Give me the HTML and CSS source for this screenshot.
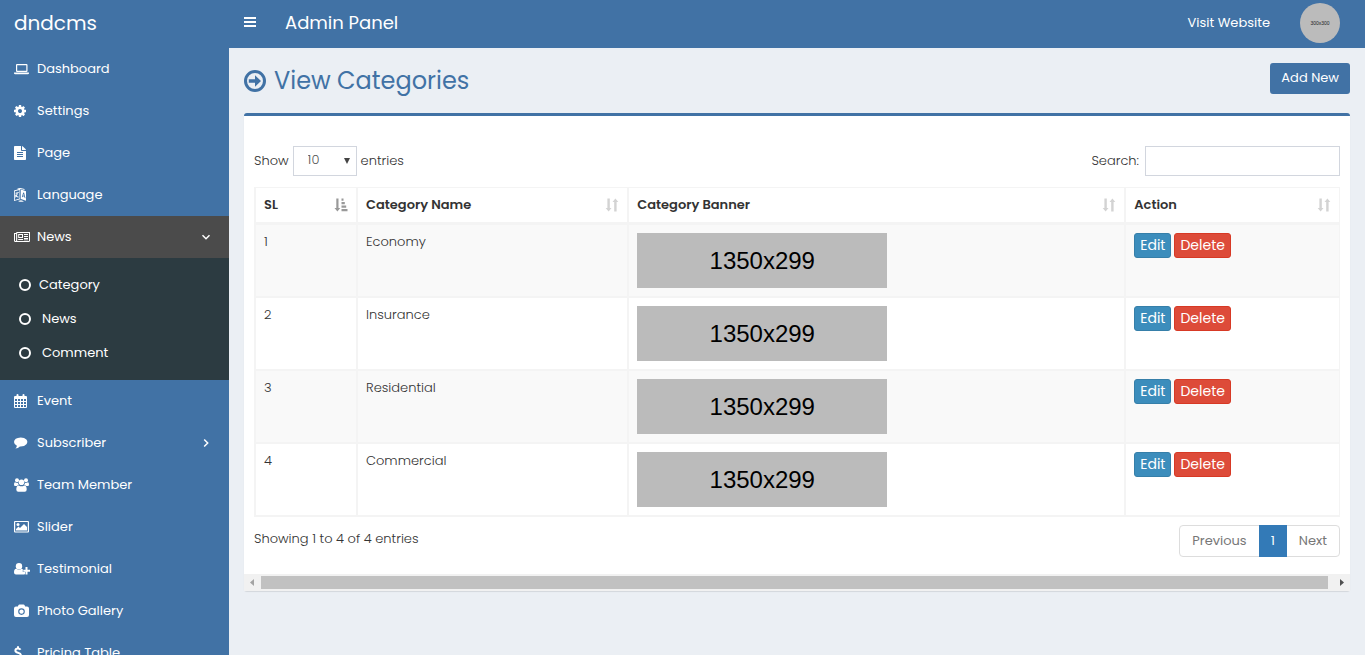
FILE: index.html
```html
<!DOCTYPE html>
<html lang="en">
<head>
<meta charset="utf-8">
<title>Admin Panel</title>
<link rel="stylesheet" href="styles.css">
</head>
<body>
<svg class="sprite" aria-hidden="true">
  <symbol id="sort" viewBox="0 0 14 14"><path d="M2.400 .5h2.400v9.500h1.700L3.600 13.500.7 10h1.700zM9.200 13.500V4H7.500L10.400.5 13.300 4h-1.700v9.500z"/></symbol>
  <symbol id="sort-asc" viewBox="0 0 14 14"><path d="M2.300 .5h2.200v9.500h1.800L3.400 13.500.5 10h1.800zM7.500.5h2v2.300h-2zM7.500 4h3.300v2.300H7.500zM7.500 7.500h4.700v2.300H7.500zM7.500 11h6v2.300h-6z"/></symbol>
</svg>
<div class="app">
  <aside class="sidebar">
    <a class="brand" href="#">dndcms</a>
    <nav>
      <ul class="menu">
        <li><a class="item" href="#"><svg class="icon" viewBox="0 0 16 14"><path fill-rule="evenodd" d="M3 2h9.500q1 0 1 1v6q0 1-1 1H3q-1 0-1-1V3q0-1 1-1zm.2 1.200v5.600h9.100V3.200zM0 10.600h15v.7q0 1-1.300 1H1.300Q0 12.300 0 11.300z"/></svg>Dashboard</a></li>
        <li><a class="item" href="#"><svg class="icon" viewBox="128 0 2048 1792"><path d="M1152 896q0-106-75-181t-181-75-181 75-75 181 75 181 181 75 181-75 75-181zm512-109v222q0 12-8 23t-20 13l-185 28q-19 54-39 91 35 50 107 138 10 12 10 25t-9 23q-27 37-99 108t-94 71q-12 0-26-9l-138-108q-44 23-91 38-16 136-29 186-7 28-36 28h-222q-14 0-24.500-8.500t-11.500-21.500l-28-184q-49-16-90-37l-141 107q-10 9-25 9-14 0-25-11-126-114-165-168-7-10-7-23 0-12 8-23 15-21 51-66.500t54-70.500q-27-50-41-99l-183-27q-13-2-21-12.500t-8-23.500v-222q0-12 8-23t19-13l186-28q14-46 39-92-40-57-107-138-10-12-10-24 0-10 9-23 26-36 98.500-107.500t94.500-71.500q13 0 26 10l138 107q44-23 91-38 16-136 29-186 7-28 36-28h222q14 0 24.500 8.500t11.500 21.500l28 184q49 16 90 37l142-107q9-9 24-9 13 0 25 10 129 119 165 170 7 8 7 22 0 12-8 23-15 21-51 66.500t-54 70.500q26 50 41 98l183 28q13 2 21 12.500t8 23.500z"/></svg>Settings</a></li>
        <li><a class="item" href="#"><svg class="icon" viewBox="0 0 16 14"><path fill-rule="evenodd" d="M.8 0H7v4.200q0 .8.800.8H12v8.200q0 .8-.8.800H.8Q0 14 0 13.200V.8Q0 0 .8 0zM8 0q.5.100.900.500l2.600 2.600q.4.400.5.900H8zM3 6v1h6V6zm0 2v1h6V8zm0 2v1h6v-1z"/></svg>Page</a></li>
        <li><a class="item" href="#"><svg class="icon" viewBox="0 0 16 14"><path fill-rule="evenodd" d="M0 2.500L6.300.8v10.500L0 13zM.8 3.200v8.700l4.700-1.300V2zM7 1.500l5 1.700v9.600l-5-1.700zm2.200 3L7.900 9l.8.300.3-1 1.400.5.300 1.200.8.200-1.400-5.400zm.4 1.200.6 2-1-.3z"/><path d="M1.500 4.800l3.300-.9v.9l-1.200.4q-.1 1.800-.8 2.900.9.500 1.800.4v.9q-1.300.1-2.400-.6-.5.700-1 .900l-.2-.8q.300-.2.600-.6-.6-.6-.7-1.500l.7-.2q.1.500.4.900.5-1 .6-2l-1.100.3zM3 .9Q5-.2 7.500.2l3 .8v1L7 1 4.200 1.500zM4 13l3-.8 3 1q-3 1.400-6-.2z"/></svg>Language</a></li>
        <li class="open">
          <a class="item active" href="#"><svg class="icon" viewBox="0 0 16 14"><path fill-rule="evenodd" d="M2.300 2H16v8.700q0 1.300-1.300 1.300H1.300Q0 12 0 10.700V3h2.300zM1 4v6.600q0 .4.500.4t.6-.5V4zm2.200-1v7.600l-.1.400h11.500q.4 0 .4-.4V3zM4.200 4H9v4H4.200zm1 1v2H8V5zM4.200 9H9v1H4.200zM10 4h4v1h-4zm0 2h4v1h-4zm0 2h4v1h-4zm0 1.500h4v.7h-4z"/></svg>News<svg class="chevron" viewBox="0 0 10 10"><path d="M1.500 3.200L5 6.700l3.500-3.500"/></svg></a>
          <ul class="submenu">
            <li><a class="subitem tight" href="#"><svg class="ring" viewBox="0 0 12 12"><circle cx="6" cy="6" r="5"/></svg>Category</a></li>
            <li><a class="subitem" href="#"><svg class="ring" viewBox="0 0 12 12"><circle cx="6" cy="6" r="5"/></svg>News</a></li>
            <li><a class="subitem" href="#"><svg class="ring" viewBox="0 0 12 12"><circle cx="6" cy="6" r="5"/></svg>Comment</a></li>
          </ul>
        </li>
        <li><a class="item" href="#"><svg class="icon" viewBox="0 0 16 14"><path fill-rule="evenodd" d="M1 2h1.500V1q0-1 1-1t1 1v1h4V1q0-1 1-1t1 1v1H12q1 0 1 1v10q0 1-1 1H1q-1 0-1-1V3q0-1 1-1zm0 3v2h2V5zm3 0v2h2V5zm3 0v2h2V5zm3 0v2h2V5zM1 8v2h2V8zm3 0v2h2V8zm3 0v2h2V8zm3 0v2h2V8zM1 11v2h2v-2zm3 0v2h2v-2zm3 0v2h2v-2zm3 0v2h2v-2z"/></svg>Event</a></li>
        <li><a class="item" href="#"><svg class="icon" viewBox="0 0 16 14"><path d="M6.700 1.500q3.800 0 5.700 2 1.900 2.300 0 4.800-2 2.400-6.500 2.200-1.700 1.800-4.500 2.100 1.400-1.200 1.500-2.900Q0 8.300 0 6q.200-4.200 6.700-4.500z"/></svg>Subscriber<svg class="chevron" viewBox="0 0 10 10"><path d="M3.200 1.500L6.700 5 3.200 8.500"/></svg></a></li>
        <li><a class="item" href="#"><svg class="icon" viewBox="0 0 16 14"><circle cx="3" cy="2.300" r="2"/><circle cx="12" cy="2.300" r="2"/><circle cx="7.500" cy="4.300" r="2.800"/><path d="M0 6.800Q0 4 1.500 4.400q1.300.800 2.500.3Q4 6 4.900 7q-1.300 0-2.100 1H1.200Q0 8 0 6.800zM15 6.800Q15 4 13.500 4.400q-1.300.8-2.500.3Q11 6 10.100 7q1.300 0 2.100 1h1.600Q15 8 15 6.800zM2.300 11.500q0-4 2.500-4 2.700 1.700 5.400 0 2.500 0 2.500 4 0 2.300-2 2.300H4.300q-2 0-2-2.300z"/></svg>Team Member</a></li>
        <li><a class="item" href="#"><svg class="icon" viewBox="0 0 16 14"><path fill-rule="evenodd" d="M1 1h13q1 0 1 1v9.500q0 1-1 1H1q-1 0-1-1V2q0-1 1-1zm.2 1.100v9.300h12.600V2.100z"/><circle cx="4" cy="4.500" r="1.500"/><path d="M2 10.500V9l2.500-2.500L6 8l4-4 3 3v3.500z"/></svg>Slider</a></li>
        <li><a class="item" href="#"><svg class="icon" viewBox="0 0 16 14"><circle cx="5" cy="4.300" r="3.200"/><path d="M0 10.500Q0 6.500 2.500 6.800q2.500 1.800 5 0 1 0 1.600.700H8.800V10H11v2q-.6.500-1.600.5H2Q0 12.500 0 10.500zM11.500 5h2v2.700H16v2h-2.500v2.800h-2V9.700H9.300v-2h2.200z"/></svg>Testimonial</a></li>
        <li><a class="item" href="#"><svg class="icon" viewBox="0 0 16 14"><path fill-rule="evenodd" d="M2 2.500h1.800l.6-1.300Q4.700.5 5.500.5h4q.8 0 1.100.7l.6 1.300H13q2 0 2 2V11q0 2-2 2H2q-2 0-2-2V4.500q0-2 2-2zm5.500 1.800a3.300 3.300 0 1 0 0 6.600 3.300 3.300 0 1 0 0-6.600zm0 1.100a2.200 2.200 0 1 1 0 4.400 2.200 2.200 0 1 1 0-4.400z"/></svg>Photo Gallery</a></li>
        <li><a class="item" href="#"><svg class="icon line" viewBox="0 0 16 14"><path d="M6.500 3.800Q5.800 2.500 4 2.500 1.400 2.500 1.400 4.400q0 1.700 2.600 2.400 3 .8 3 2.700 0 2-2.800 2Q2 11.500 1 10M4 .2v2.300M4 11.500v2.300"/></svg>Pricing Table</a></li>
      </ul>
    </nav>
  </aside>
  <div class="main">
    <header class="topbar">
      <button class="toggle" type="button" aria-label="Toggle navigation"><svg viewBox="0 0 12 10"><path d="M0 0h12v2H0zM0 4h12v2H0zM0 8h12v2H0z"/></svg></button>
      <span class="panel-name">Admin Panel</span>
      <a class="visit" href="#">Visit Website</a>
      <a class="avatar" href="#">300x300</a>
    </header>
    <main class="content">
      <div class="page-head">
        <h1><svg viewBox="0 0 22 22"><circle cx="11" cy="11" r="9.500"/><path d="M4.800 9.300H11V5.200l6 5.800-6 5.800v-4.100H4.800z"/></svg>View Categories</h1>
        <a class="add" href="#">Add New</a>
      </div>
      <section class="box">
        <div class="box-body">
          <div class="controls">
            <label class="length">Show
              <span class="select"><select><option>10</option><option>25</option><option>50</option></select><svg viewBox="0 0 6 6"><path d="M0 0h6L3 6z"/></svg></span>
              entries</label>
            <label class="search">Search: <input type="search"></label>
          </div>
          <table class="grid">
            <colgroup><col class="c-sl"><col class="c-name"><col class="c-banner"><col></colgroup>
            <thead>
              <tr>
                <th><div class="th">SL<svg class="on"><use href="#sort-asc"/></svg></div></th>
                <th><div class="th">Category Name<svg><use href="#sort"/></svg></div></th>
                <th><div class="th">Category Banner<svg><use href="#sort"/></svg></div></th>
                <th><div class="th">Action<svg><use href="#sort"/></svg></div></th>
              </tr>
            </thead>
            <tbody>
              <tr><td>1</td><td>Economy</td><td><div class="banner">1350x299</div></td><td><div class="actions"><a class="btn edit" href="#">Edit</a><a class="btn delete" href="#">Delete</a></div></td></tr>
              <tr><td>2</td><td>Insurance</td><td><div class="banner">1350x299</div></td><td><div class="actions"><a class="btn edit" href="#">Edit</a><a class="btn delete" href="#">Delete</a></div></td></tr>
              <tr><td>3</td><td>Residential</td><td><div class="banner">1350x299</div></td><td><div class="actions"><a class="btn edit" href="#">Edit</a><a class="btn delete" href="#">Delete</a></div></td></tr>
              <tr><td>4</td><td>Commercial</td><td><div class="banner">1350x299</div></td><td><div class="actions"><a class="btn edit" href="#">Edit</a><a class="btn delete" href="#">Delete</a></div></td></tr>
            </tbody>
          </table>
          <div class="footer">
            <span>Showing 1 to 4 of 4 entries</span>
            <nav class="pages"><a href="#">Previous</a><a class="current" href="#">1</a><a href="#">Next</a></nav>
          </div>
        </div>
        <div class="scrollbar" aria-hidden="true">
          <svg class="dim" viewBox="0 0 17 17"><path d="M10 5v7L6 8.500z"/></svg>
          <div class="track"><div class="thumb"></div></div>
          <svg viewBox="0 0 17 17"><path d="M7 5v7l4-3.500z"/></svg>
        </div>
      </section>
    </main>
  </div>
</div>
</body>
</html>
```
FILE: styles.css
```css
* { box-sizing: border-box; }
body {
  margin: 0;
  height: 100vh;
  overflow: hidden;
  background: #ebeff4;
  color: #333;
  font: 13px/18px Poppins, Inter, sans-serif;
}
a { color: inherit; text-decoration: none; }
ul { margin: 0; padding: 0; list-style: none; }
svg { flex: none; fill: currentColor; }
.sprite { position: absolute; width: 0; height: 0; }

.app { display: flex; height: 100%; }

.sidebar { flex: none; width: 229px; overflow: hidden; background: #4172a5; color: #fff; }
.brand { display: block; height: 48px; padding-left: 14px; font-size: 20px; line-height: 46px; }
.item { display: flex; align-items: center; height: 42px; padding: 0 18px 1px 14px; }
.item.active { background: #4b4b4b; }
.icon { width: 16px; height: 14px; margin-right: 7px; }
.icon.line { fill: none; stroke: currentColor; stroke-width: 2; }
.chevron { width: 10px; height: 10px; margin-left: auto; fill: none; stroke: currentColor; stroke-width: 1.5; }
.submenu { padding: 10px 0; background: #2c3b41; }
.subitem { display: flex; align-items: center; gap: 11px; height: 34px; padding: 0 19px 1px; }
.subitem.tight { gap: 8px; }
.ring { width: 12px; height: 12px; fill: none; stroke: currentColor; stroke-width: 2; }

.main { flex: 1; min-width: 0; }
.topbar { display: flex; align-items: center; height: 48px; padding: 0 25px 2px 15px; background: #4172a5; color: #fff; }
.toggle { margin: 0 29px 0 0; padding: 0 0 2px; border: 0; background: none; color: inherit; line-height: 0; }
.toggle svg { width: 12px; height: 10px; }
.panel-name { font-size: 18px; }
.visit { margin-left: auto; }
.avatar { width: 40px; height: 40px; margin-left: 30px; border-radius: 50%; background: #bbb; color: #222; font: 5px/40px "Liberation Sans", sans-serif; text-align: center; }

.content { padding: 15px; }
.page-head { display: flex; justify-content: space-between; align-items: flex-start; height: 50px; color: #4172a5; }
h1 { display: flex; align-items: center; gap: 8px; margin: 0; font-size: 24px; font-weight: 400; line-height: 36px; }
h1 svg { width: 22px; height: 22px; }
h1 circle { fill: none; stroke: currentColor; stroke-width: 3; }
.add { padding: 6px 11px 7px; border-radius: 3px; background: #4172a5; color: #fff; }

.box { border-top: 3px solid #4172a5; border-radius: 3px; background: #fff; box-shadow: 0 1px 1px rgba(0, 0, 0, .1); }
.box-body { padding: 30px 10px 17px; font-weight: 300; }
.controls { display: flex; justify-content: space-between; margin-bottom: 11px; }
.controls label { display: flex; align-items: center; }
.length { gap: 4px; }
.search { gap: 6px; }
.select { display: grid; align-items: center; width: 64px; height: 30px; }
.select > * { grid-area: 1 / 1; }
.select svg { justify-self: end; width: 6px; height: 6px; margin-right: 7px; pointer-events: none; fill: #444; }
select, input { height: 30px; border: 1px solid #d2d6de; border-radius: 0; background: #fff; color: #555; font: inherit; }
select { width: 100%; padding: 0 14px 2px; appearance: none; }
input { width: 195px; padding: 5px 10px; }

.grid { width: 100%; table-layout: fixed; border-collapse: separate; border-spacing: 0; border: solid #f4f4f4; border-width: 1px 1px 0 0; }
.c-sl { width: 102px; }
.c-name { width: 25%; }
.c-banner { width: 497px; }
th, td { padding: 8px; border: solid #f4f4f4; border-width: 0 0 2px 2px; text-align: left; vertical-align: top; }
th { border-bottom-width: 3px; font-weight: 600; }
.th { display: flex; justify-content: space-between; align-items: center; }
.th svg { width: 14px; height: 14px; color: #d3d3d3; }
.th .on { color: #999; }
tbody tr:nth-child(odd) { background: #f9f9f9; }
.banner { width: 250px; height: 55px; background: #bbb; color: #000; font: 24px/55px "Liberation Sans", Arial, sans-serif; text-align: center; }
.actions { display: flex; gap: 3px; }
.btn { padding: 2px 5px 3px; border: 1px solid; border-radius: 3px; color: #fff; font-size: 14px; font-weight: 400; }
.edit { border-color: #367fa9; background: #3c8dbc; }
.delete { border-color: #d73925; background: #dd4b39; }

.footer { display: flex; justify-content: space-between; align-items: flex-start; padding-top: 8px; }
.footer span { padding-top: 5px; }
.pages { display: flex; border: 1px solid #ddd; border-radius: 4px; color: #777; font-weight: 400; }
.pages a { padding: 6px 12px; }
.pages .current { margin: -1px 0; padding: 7px 12px; background: #337ab7; color: #fff; }

.scrollbar { display: flex; height: 17px; background: #f1f1f1; }
.scrollbar svg { width: 17px; height: 17px; fill: #505050; }
.scrollbar .dim { fill: #a3a3a3; }
.track { flex: 1; padding: 2px 5px 2px 0; }
.thumb { height: 100%; background: #c1c1c1; }
```
